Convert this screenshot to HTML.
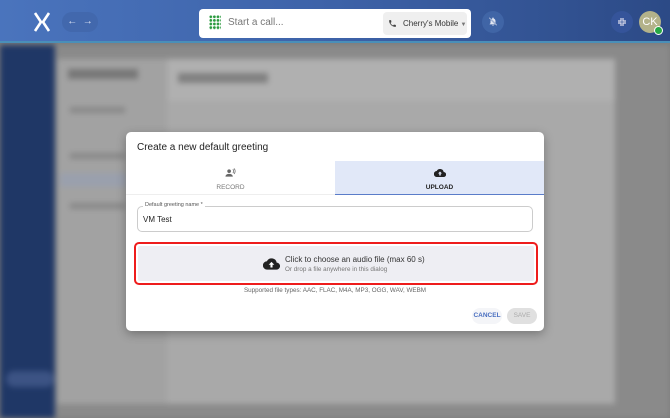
<!DOCTYPE html>
<html><head><style>
*{box-sizing:border-box;margin:0;padding:0}
body{width:670px;height:418px;overflow:hidden;font-family:"Liberation Sans",sans-serif;position:relative;background:#7d7d7d}
.abs{position:absolute}
.hdr{left:0;top:0;width:670px;height:43px;background:linear-gradient(90deg,#4a74bd,#3d62a8 50%,#2c4a86);border-bottom:2px solid #4a8fb8}
.bg{left:0;top:45px;width:670px;height:373px;filter:blur(3px)}
</style></head><body>
<div class="abs bg">
  <div class="abs" style="left:0;top:0;width:60px;height:373px;background:#1f3766"></div>
  <div class="abs" style="left:55px;top:0;width:615px;height:373px;background:#8a8a8a"></div>
  <div class="abs" style="left:57px;top:14px;width:558px;height:345px;background:#a9a9a9"></div>
  <div class="abs" style="left:57px;top:14px;width:110px;height:345px;background:#a2a2a2"></div>
  <div class="abs" style="left:168px;top:14px;width:447px;height:42px;background:#b0b0b0"></div>
  <div class="abs" style="left:68px;top:24px;width:70px;height:10px;background:#777"></div>
  <div class="abs" style="left:178px;top:28px;width:90px;height:10px;background:#808080"></div>
  <div class="abs" style="left:70px;top:62px;width:55px;height:6px;background:#888"></div>
  <div class="abs" style="left:70px;top:108px;width:55px;height:6px;background:#888"></div>
  <div class="abs" style="left:60px;top:128px;width:66px;height:14px;background:#9aa0ad"></div>
  <div class="abs" style="left:70px;top:158px;width:55px;height:6px;background:#888"></div>
  <div class="abs" style="left:6px;top:326px;width:48px;height:16px;background:#3c5384;border-radius:8px"></div>
</div>
<div class="abs hdr">
  <svg class="abs" style="left:33px;top:12px" width="18" height="20" viewBox="0 0 18 20"><path d="M2 1l6 9-6 9M16 1l-6 9 6 9" stroke="#fff" stroke-width="2.6" fill="none"/></svg>
  <div class="abs" style="left:62px;top:12px;width:36px;height:20px;border-radius:10px;background:#4268ad;color:#dfe6f5;font-size:10px;line-height:20px;text-align:center">←&nbsp;&nbsp;→</div>
  <div class="abs" style="left:199px;top:9px;width:272px;height:29px;background:#fff;border-radius:4px">
    <div class="abs" style="left:10px;top:6px;width:12px;height:15px;background:radial-gradient(circle,#2a9a3e 1.2px,transparent 1.6px) 0 0/3.6px 3.6px"></div>
    <div class="abs" style="left:29px;top:8px;font-size:10px;color:#777">Start a call...</div>
    <div class="abs" style="left:184px;top:3px;width:84px;height:23px;background:#efefef;border-radius:4px;font-size:8px;color:#333;line-height:23px;padding-left:20px">Cherry's Mobile <span style="color:#777;font-size:6px">▼</span>
      <svg class="abs" style="left:5px;top:7px" width="9" height="9" viewBox="0 0 24 24"><path d="M6.6 10.8a15 15 0 0 0 6.6 6.6l2.2-2.2c.3-.3.7-.4 1-.2 1.1.4 2.3.6 3.6.6.6 0 1 .4 1 1V20c0 .6-.4 1-1 1A17 17 0 0 1 3 4c0-.6.4-1 1-1h3.5c.6 0 1 .4 1 1 0 1.3.2 2.5.6 3.6.1.3 0 .7-.2 1z" fill="#444"/></svg>
    </div>
  </div>
  <div class="abs" style="left:482px;top:11px;width:22px;height:22px;border-radius:50%;background:#4065a6">
    <svg class="abs" style="left:6px;top:5px" width="10" height="11" viewBox="0 0 24 24"><path d="M12 22a2 2 0 0 0 2-2h-4a2 2 0 0 0 2 2zm6-6v-5c0-3-1.6-5.6-4.5-6.3V4a1.5 1.5 0 0 0-3 0v.7C7.6 5.4 6 8 6 11v5l-2 2v1h16v-1z" fill="#e4e8f2"/><path d="M3 3l18 18" stroke="#4065a6" stroke-width="3"/><path d="M3 3l18 18" stroke="#e4e8f2" stroke-width="1.5"/></svg>
  </div>
  <div class="abs" style="left:611px;top:11px;width:22px;height:22px;border-radius:50%;background:#35549a">
    <svg class="abs" style="left:7px;top:7px" width="8" height="8" viewBox="0 0 8 8"><path d="M3 0v3H0M5 0v3h3M3 8V5H0M5 8V5h3" stroke="#dde" stroke-width="1.2" fill="none"/></svg>
  </div>
  <div class="abs" style="left:639px;top:11px;width:22px;height:22px;border-radius:50%;background:#b3b28a;color:#fff;font-size:11px;text-align:center;line-height:22px">CK</div>
  <div class="abs" style="left:654px;top:26px;width:9px;height:9px;border-radius:50%;background:#27a845;border:1.5px solid #fff"></div>
</div>
<div class="abs" style="left:126px;top:132px;width:418px;height:199px;background:#fff;border-radius:5px;box-shadow:0 3px 10px rgba(0,0,0,.3);overflow:hidden">
  <div class="abs" style="left:11px;top:10px;font-size:10px;color:#222">Create a new default greeting</div>
  <div class="abs" style="left:0;top:29px;width:209px;height:34px;border-bottom:1px solid #eee;text-align:center">
    <svg style="margin-top:7px" width="11" height="10" viewBox="0 0 24 20"><circle cx="9" cy="6" r="4" fill="#666"/><path d="M1 18c0-4 4-6 8-6s8 2 8 6z" fill="#666"/><path d="M17 2a5 5 0 0 1 0 8M19.5 0a8 8 0 0 1 0 12" stroke="#666" stroke-width="1.6" fill="none"/></svg>
    <div style="font-size:6.5px;color:#777;margin-top:1px">RECORD</div>
  </div>
  <div class="abs" style="left:209px;top:29px;width:209px;height:34px;background:#e1e8f8;border-bottom:1.5px solid #5a7cc9;text-align:center">
    <svg style="margin-top:7px" width="12" height="10" viewBox="0 0 24 20"><path d="M19.4 8A7.5 7.5 0 0 0 5.4 6 6 6 0 0 0 6 18h13a5 5 0 0 0 .4-10z" fill="#222"/><path d="M12 7l-4 4h2.5v4h3v-4H16z" fill="#e1e8f8"/></svg>
    <div style="font-size:6.5px;color:#222;margin-top:1px;font-weight:bold">UPLOAD</div>
  </div>
  <div class="abs" style="left:11px;top:74px;width:396px;height:26px;border:1px solid #ccc;border-radius:5px">
    <div class="abs" style="left:5px;top:-5px;background:#fff;padding:0 2px;font-size:5.5px;color:#555">Default greeting name *</div>
    <div class="abs" style="left:5px;top:8px;font-size:8px;color:#222">VM Test</div>
  </div>
  <div class="abs" style="left:8px;top:110px;width:404px;height:43px;border:2px solid #ee1c1c;border-radius:5px;padding:2px">
    <div style="width:100%;height:100%;background:#eeeef3;border-radius:2px;position:relative">
      <div class="abs" style="left:125px;top:11px;width:17px;height:14px">
        <svg width="17" height="14" viewBox="0 0 24 20"><path d="M19.4 8A7.5 7.5 0 0 0 5.4 6 6 6 0 0 0 6 18h13a5 5 0 0 0 .4-10z" fill="#222"/><path d="M12 7l-4 4h2.5v4h3v-4H16z" fill="#fff"/></svg>
      </div>
      <div class="abs" style="left:147px;top:9px;font-size:8px;color:#333">Click to choose an audio file (max 60 s)</div>
      <div class="abs" style="left:147px;top:20px;font-size:6.3px;color:#777">Or drop a file anywhere in this dialog</div>
    </div>
  </div>
  <div class="abs" style="left:0;top:155px;width:418px;text-align:center;font-size:6.3px;color:#666">Supported file types: AAC, FLAC, M4A, MP3, OGG, WAV, WEBM</div>
  <div class="abs" style="left:346px;top:176px;width:30px;height:16px;border-radius:8px;background:#f4f5f8;font-size:6.5px;color:#4a6fc0;text-align:center;line-height:16px;font-weight:bold">CANCEL</div>
  <div class="abs" style="left:381px;top:176px;width:30px;height:16px;border-radius:8px;background:#e0e0e0;font-size:6.5px;color:#aaa;text-align:center;line-height:16px">SAVE</div>
</div>
</body></html>
